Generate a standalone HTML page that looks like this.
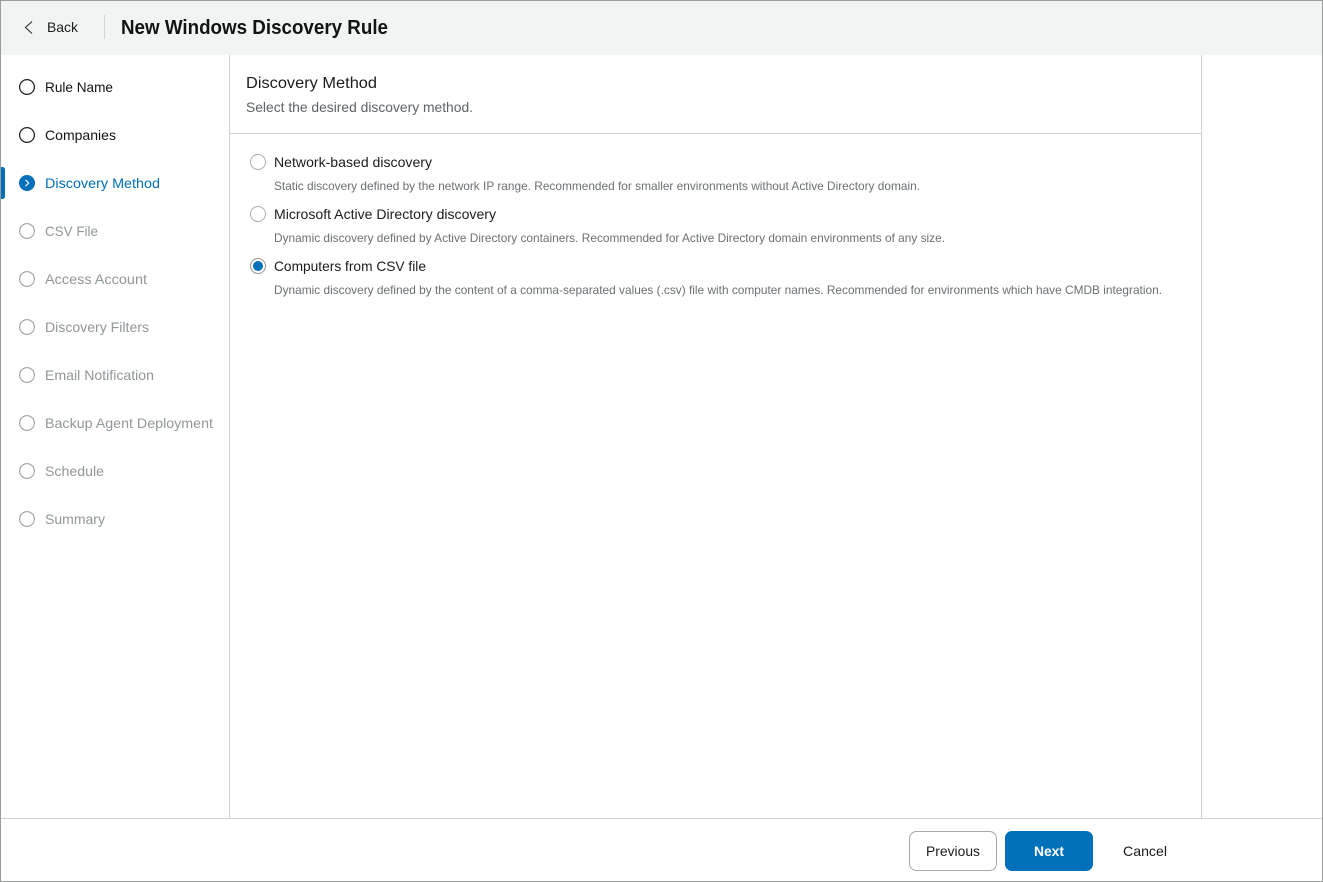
<!DOCTYPE html>
<html><head><meta charset="utf-8"><title>New Windows Discovery Rule</title>
<style>
html,body{margin:0;padding:0;background:#fff}
svg{display:block}
text{font-family:"Liberation Sans",sans-serif}
</style></head>
<body>
<svg xmlns="http://www.w3.org/2000/svg" width="1323" height="882" viewBox="0 0 1323 882">
<rect width="1323" height="882" fill="#fff"/>
<rect x="0" y="0" width="1323" height="55" fill="#f2f4f3"/>
<rect x="104" y="15" width="1" height="24" fill="#d2d4d4"/>
<path d="M32 21.5L25.5 27.5L32 33.5" fill="none" stroke="#2a2c2e" stroke-width="1.1"/>
<text x="47" y="32" font-size="14" fill="#1a1c1e" textLength="31" lengthAdjust="spacingAndGlyphs">Back</text>
<text x="121" y="34" font-size="20" font-weight="bold" fill="#111315" textLength="267" lengthAdjust="spacingAndGlyphs">New Windows Discovery Rule</text>

<rect x="229" y="55" width="1" height="764" fill="#cfd1d1"/>
<rect x="1201" y="55" width="1" height="764" fill="#cfd1d1"/>
<rect x="230" y="133" width="971" height="1" fill="#cfd1d1"/>
<rect x="0" y="818" width="1323" height="1" fill="#cfd1d1"/>

<circle cx="27" cy="87" r="7.4" fill="none" stroke="#1a1c1e" stroke-width="1.2"/>
<text x="45" y="92" font-size="14" fill="#111315" textLength="68" lengthAdjust="spacingAndGlyphs">Rule Name</text>
<circle cx="27" cy="135" r="7.4" fill="none" stroke="#1a1c1e" stroke-width="1.2"/>
<text x="45" y="140" font-size="14" fill="#111315" textLength="71" lengthAdjust="spacingAndGlyphs">Companies</text>

<path d="M1 167H2.5A2.5 2.5 0 0 1 5 169.5V196.5A2.5 2.5 0 0 1 2.5 199H1Z" fill="#0070bb"/>
<circle cx="27" cy="183" r="8" fill="#0070bb"/>
<path d="M25.5 179.8L28.7 183L25.5 186.2" fill="none" stroke="#fff" stroke-width="1.1"/>
<text x="45" y="188" font-size="14" fill="#0070bb" textLength="115" lengthAdjust="spacingAndGlyphs">Discovery Method</text>

<g fill="none" stroke="#a4a9ab" stroke-width="1.2">
<circle cx="27" cy="231" r="7.4"/>
<circle cx="27" cy="279" r="7.4"/>
<circle cx="27" cy="327" r="7.4"/>
<circle cx="27" cy="375" r="7.4"/>
<circle cx="27" cy="423" r="7.4"/>
<circle cx="27" cy="471" r="7.4"/>
<circle cx="27" cy="519" r="7.4"/>
</g>
<g font-size="14" fill="#90979a">
<text x="45" y="236" textLength="53" lengthAdjust="spacingAndGlyphs">CSV File</text>
<text x="45" y="284" textLength="102" lengthAdjust="spacingAndGlyphs">Access Account</text>
<text x="45" y="332" textLength="104" lengthAdjust="spacingAndGlyphs">Discovery Filters</text>
<text x="45" y="380" textLength="109" lengthAdjust="spacingAndGlyphs">Email Notification</text>
<text x="45" y="428" textLength="168" lengthAdjust="spacingAndGlyphs">Backup Agent Deployment</text>
<text x="45" y="476" textLength="59" lengthAdjust="spacingAndGlyphs">Schedule</text>
<text x="45" y="524" textLength="60" lengthAdjust="spacingAndGlyphs">Summary</text>
</g>

<text x="246" y="88" font-size="16" fill="#1a1c1e" textLength="131" lengthAdjust="spacingAndGlyphs">Discovery Method</text>
<text x="246" y="112" font-size="14" fill="#5d6366" textLength="227" lengthAdjust="spacingAndGlyphs">Select the desired discovery method.</text>

<circle cx="258" cy="162" r="7.5" fill="#fff" stroke="#a9adae" stroke-width="1"/>
<text x="274" y="167" font-size="14" fill="#1a1c1e" textLength="158" lengthAdjust="spacingAndGlyphs">Network-based discovery</text>
<text x="274" y="190" font-size="12" fill="#6b7073" textLength="646" lengthAdjust="spacingAndGlyphs">Static discovery defined by the network IP range. Recommended for smaller environments without Active Directory domain.</text>

<circle cx="258" cy="214" r="7.5" fill="#fff" stroke="#a9adae" stroke-width="1"/>
<text x="274" y="219" font-size="14" fill="#1a1c1e" textLength="222" lengthAdjust="spacingAndGlyphs">Microsoft Active Directory discovery</text>
<text x="274" y="242" font-size="12" fill="#6b7073" textLength="671" lengthAdjust="spacingAndGlyphs">Dynamic discovery defined by Active Directory containers. Recommended for Active Directory domain environments of any size.</text>

<circle cx="258" cy="266" r="7.5" fill="#fff" stroke="#8f9496" stroke-width="1"/>
<circle cx="258" cy="266" r="5" fill="#0070bb"/>
<text x="274" y="271" font-size="14" fill="#1a1c1e" textLength="152" lengthAdjust="spacingAndGlyphs">Computers from CSV file</text>
<text x="274" y="294" font-size="12" fill="#6b7073" textLength="888" lengthAdjust="spacingAndGlyphs">Dynamic discovery defined by the content of a comma-separated values (.csv) file with computer names. Recommended for environments which have CMDB integration.</text>

<rect x="909.5" y="831.5" width="87" height="39" rx="7" fill="#fff" stroke="#a4a9ab" stroke-width="1"/>
<text x="926" y="856" font-size="14" fill="#1a1c1e" textLength="54" lengthAdjust="spacingAndGlyphs">Previous</text>
<rect x="1005" y="831" width="88" height="40" rx="7" fill="#0070bb"/>
<text x="1034" y="856" font-size="14" font-weight="bold" fill="#fff" textLength="30" lengthAdjust="spacingAndGlyphs">Next</text>
<text x="1123" y="856" font-size="14" fill="#1a1c1e" textLength="44" lengthAdjust="spacingAndGlyphs">Cancel</text>

<rect x="0.5" y="0.5" width="1322" height="881" fill="none" stroke="#9b9d9d" stroke-width="1"/>
</svg>
</body></html>
